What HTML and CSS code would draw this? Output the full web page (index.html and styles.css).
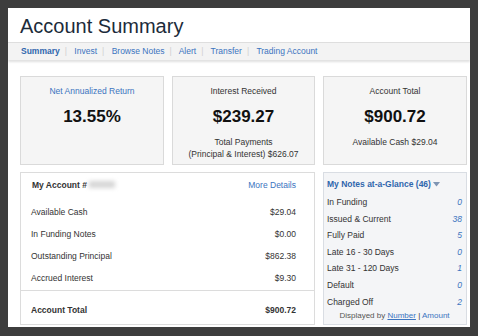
FILE: index.html
```html
<!DOCTYPE html>
<html lang="en">

<head>
    <meta charset="UTF-8">
    <meta name="viewport" content="width=device-width, initial-scale=1.0">
    <title>Account Summary</title>

    <link rel="stylesheet" href="styles.css">
</head>

<body>
    <div class="panel">
        <h1 class="title">Account Summary</h1>

        <!-- Top navigation -->
        <nav class="nav">
            <a class="active">Summary</a><span class="sep">|</span>
            <a>Invest</a><span class="sep">|</span>
            <a>Browse Notes</a><span class="sep">|</span>
            <a>Alert</a><span class="sep">|</span>
            <a>Transfer</a><span class="sep">|</span>
            <a>Trading Account</a>
        </nav>

        <div class="content">
            <!-- Summary boxes -->
            <div class="stat">
                <div class="stat-label blue">Net Annualized Return</div>
                <div class="stat-value">13.55%</div>
            </div>

            <div class="stat">
                <div class="stat-label">Interest Received</div>
                <div class="stat-value">$239.27</div>
                <div class="stat-sub">Total Payments<br>(Principal &amp; Interest) $626.07</div>
            </div>

            <div class="stat">
                <div class="stat-label">Account Total</div>
                <div class="stat-value">$900.72</div>
                <div class="stat-sub">Available Cash $29.04</div>
            </div>

            <!-- Account details -->
            <div class="account">
                <div class="account-head">
                    <span class="bold">My Account #<span class="masked"></span></span>
                    <a class="blue">More Details</a>
                </div>
                <div class="row"><span>Available Cash</span><span>$29.04</span></div>
                <div class="row"><span>In Funding Notes</span><span>$0.00</span></div>
                <div class="row"><span>Outstanding Principal</span><span>$862.38</span></div>
                <div class="row"><span>Accrued Interest</span><span>$9.30</span></div>
                <div class="row total"><span>Account Total</span><span>$900.72</span></div>
            </div>

            <!-- Notes at a glance -->
            <div class="notes">
                <div class="notes-head">My Notes at-a-Glance (46)
                    <svg width="7" height="5" viewBox="0 0 7 5"><path d="M0 0 L7 0 L3.5 4.5 Z" fill="#7f95b3"/></svg>
                </div>
                <div class="note"><span>In Funding</span><i>0</i></div>
                <div class="note"><span>Issued &amp; Current</span><i>38</i></div>
                <div class="note"><span>Fully Paid</span><i>5</i></div>
                <div class="note"><span>Late 16 - 30 Days</span><i>0</i></div>
                <div class="note"><span>Late 31 - 120 Days</span><i>1</i></div>
                <div class="note"><span>Default</span><i>0</i></div>
                <div class="note"><span>Charged Off</span><i>2</i></div>
                <div class="notes-foot">Displayed by <u>Number</u> <span class="dark">|</span> <span class="blue">Amount</span></div>
            </div>
        </div>
    </div>
</body>

</html>
```

FILE: styles.css
```css
body {
    background-color: #3d3d3d;
    font-family: "Liberation Sans", Arial, sans-serif;
    font-size: 8.5px;
    color: #333;
    margin: 0;
    padding: 0;
}

.panel {
    background-color: #fff;
    width: 462px;
    height: 319px;
    margin: 8px;
    overflow: hidden;
}

.title {
    margin: 0;
    padding: 6px 0 4px 12px;
    font-size: 20px;
    font-weight: normal;
    line-height: 24px;
    color: #1c2b3a;
}

.nav {
    height: 17px;
    line-height: 17px;
    padding-left: 13px;
    background-color: #f3f3f3;
    border-top: 1px solid #dedede;
    box-shadow: 0 2px 2px rgba(0, 0, 0, 0.12);
    color: #3b74c0;
}

.nav a.active {
    font-weight: bold;
    color: #2f66ad;
}

.sep {
    color: #d0d0d0;
    margin: 0 5px;
}

.content {
    display: grid;
    grid-template-columns: 144px 143px 144px;
    grid-template-rows: 89px 153px;
    gap: 7px 8px;
    padding: 16px 3px 0 12px;
}

.blue {
    color: #3b74c0;
}

.bold {
    font-weight: bold;
}

.stat {
    background-color: #f5f5f5;
    border: 1px solid #dadada;
    text-align: center;
    padding-top: 8px;
    box-sizing: border-box;
}

.stat-label {
    line-height: 12px;
}

.stat-value {
    font-size: 17px;
    font-weight: bold;
    line-height: 20px;
    margin-top: 10px;
    color: #111;
}

.stat-sub {
    line-height: 12px;
    margin-top: 9px;
}

.account {
    grid-column: span 2;
    border: 1px solid #dcdcdc;
    box-sizing: border-box;
}

.account-head {
    display: flex;
    justify-content: space-between;
    line-height: 12px;
    padding: 6px 18px 0 11px;
    margin-bottom: 10px;
}

.masked {
    display: inline-block;
    width: 26px;
    height: 7px;
    margin-left: 2px;
    background-color: #d6d6d6;
    filter: blur(2px);
}

.row {
    display: flex;
    justify-content: space-between;
    line-height: 22px;
    padding: 0 18px 0 10px;
}

.row.total {
    font-weight: bold;
    border-top: 1px solid #dcdcdc;
    margin-top: 1px;
    padding-top: 8px;
}

.notes {
    background-color: #f4f5f7;
    border: 1px solid #d9dde3;
    box-sizing: border-box;
    padding: 5px 4px 0 3px;
}

.notes-head {
    font-weight: bold;
    color: #2f66ad;
    line-height: 12px;
    margin-bottom: 4px;
}

.note {
    display: flex;
    justify-content: space-between;
    line-height: 16.6px;
}

.note i {
    color: #3b74c0;
}

.notes-foot {
    text-align: center;
    font-size: 8px;
    line-height: 12px;
    color: #555;
}

.notes-foot u {
    color: #3b74c0;
}

.dark {
    color: #333;
}
```
